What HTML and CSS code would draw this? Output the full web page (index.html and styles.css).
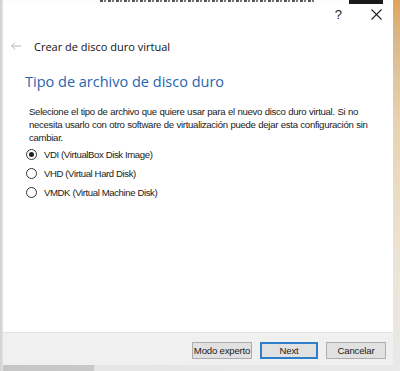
FILE: index.html
```html
<!DOCTYPE html>
<html lang="es">
<head>
    <meta charset="UTF-8">
    <title>Crear de disco duro virtual</title>
    <link rel="stylesheet" href="styles.css">
</head>
<body>
    <div class="desktop">
        <div class="left-edge"></div>
        <div class="column">
            <div class="behind">
                <span class="behind-text"></span>
                <span class="behind-bar"></span>
            </div>
            <div class="dialog">
                <div class="title-bar">
                    <span class="title-btn help">?</span>
                    <span class="title-btn close">
                        <svg width="11" height="11" viewBox="0 0 11 11" fill="none" stroke="#222" stroke-width="1.1">
                            <line x1="0.5" y1="0.5" x2="10.5" y2="10.5"></line>
                            <line x1="10.5" y1="0.5" x2="0.5" y2="10.5"></line>
                        </svg>
                    </span>
                </div>
                <div class="wizard-header">
                    <svg class="back" width="10" height="8" viewBox="0 0 10 8" fill="none" stroke="#b5b5b5" stroke-width="1">
                        <line x1="0.5" y1="4" x2="10" y2="4"></line>
                        <polyline points="4,0.5 0.7,4 4,7.5"></polyline>
                    </svg>
                    <span class="wizard-title">Crear de disco duro virtual</span>
                </div>
                <div class="page">
                    <h2 class="page-title">Tipo de archivo de disco duro</h2>
                    <p class="description">Selecione el tipo de archivo que quiere usar para el nuevo disco duro virtual. Si no necesita usarlo con otro software de virtualización puede dejar esta configuración sin cambiar.</p>
                    <div class="options">
                        <label class="option"><span class="radio checked"></span>VDI (VirtualBox Disk Image)</label>
                        <label class="option"><span class="radio"></span>VHD (Virtual Hard Disk)</label>
                        <label class="option"><span class="radio"></span>VMDK (Virtual Machine Disk)</label>
                    </div>
                </div>
                <div class="footer">
                    <button class="btn">Modo experto</button>
                    <button class="btn default">Next</button>
                    <button class="btn">Cancelar</button>
                </div>
            </div>
            <div class="shadow"></div>
        </div>
        <div class="right-edge"></div>
    </div>
</body>
</html>
```

FILE: styles.css
```css
* {
    margin: 0;
    padding: 0;
    box-sizing: border-box;
}

body {
    width: 400px;
    height: 371px;
    overflow: hidden;
    background: #d4d4d4;
    font-family: "Liberation Sans", Arial, sans-serif;
}

.desktop {
    display: flex;
    height: 371px;
}

.left-edge {
    width: 3px;
    background: linear-gradient(to right, #cfcfcf, #e4e4e4);
}

.column {
    width: 390px;
    display: flex;
    flex-direction: column;
}

.right-edge {
    width: 7px;
    background: linear-gradient(to bottom, #e2a35a 0, #d9b98c 40px, #e8d2b0 120px, #ece3d3 250px, #e9e9e9 371px);
}

/* bottom of the window lying behind the dialog */
.behind {
    height: 4px;
    background: #fdfdfd;
    display: flex;
    overflow: hidden;
}

.behind-text {
    width: 215px;
    height: 2px;
    margin-left: 97px;
    background: repeating-linear-gradient(to right, #555 0, #555 3px, transparent 3px, transparent 4px, #777 4px, #777 6px, transparent 6px, transparent 8px);
}

.behind-bar {
    width: 34px;
    margin-left: 34px;
    background: #1a1a1a;
}

.dialog {
    height: 361px;
    background: #fff;
    display: flex;
    flex-direction: column;
}

.title-bar {
    height: 20px;
    display: flex;
    justify-content: flex-end;
    align-items: center;
    padding-right: 11px;
}

.title-btn {
    font-size: 13px;
    color: #222;
    line-height: 13px;
}

.help {
    margin-right: 29px;
}

.close {
    display: flex;
}

.wizard-header {
    height: 44px;
    display: flex;
    align-items: center;
    padding-left: 8px;
}

.back {
    margin-right: 13px;
}

.wizard-title {
    font-family: "Open Sans", sans-serif;
    font-size: 11px;
    color: #111;
}

.page {
    flex: 1;
    padding: 4px 16px 0 22px;
}

.page-title {
    font-family: "Open Sans", sans-serif;
    font-weight: normal;
    font-size: 14.5px;
    color: #2765ae;
    line-height: 20px;
}

.description {
    margin: 13px 0 0 4px;
    width: 346px;
    font-size: 9.6px;
    letter-spacing: -0.3px;
    word-spacing: 0.3px;
    line-height: 13px;
    color: #1a1a1a;
}

.options {
    margin: 1px 0 0 1px;
    display: flex;
    flex-direction: column;
}

.option {
    display: flex;
    align-items: center;
    height: 19px;
    font-size: 9.6px;
    letter-spacing: -0.4px;
    color: #1a1a1a;
}

.radio {
    width: 11px;
    height: 11px;
    border: 1px solid #333;
    border-radius: 50%;
    margin-right: 7px;
    display: flex;
    align-items: center;
    justify-content: center;
}

.radio.checked::after {
    content: "";
    width: 5px;
    height: 5px;
    border-radius: 50%;
    background: #222;
}

.footer {
    height: 33px;
    background: #f0f0f0;
    border-top: 1px solid #e3e3e3;
    display: flex;
    justify-content: flex-end;
    align-items: center;
    gap: 8px;
    padding-right: 7px;
    padding-top: 2px;
}

.btn {
    width: 60px;
    height: 17px;
    background: #e1e1e1;
    border: 1px solid #adadad;
    font-family: "Liberation Sans", Arial, sans-serif;
    font-size: 9.6px;
    letter-spacing: -0.2px;
    white-space: nowrap;
    color: #222;
}

.btn.default {
    border: 2px solid #2f7fcb;
    width: 58px;
}

.shadow {
    flex: 1;
    background: linear-gradient(to right, #c6c6c6 0, #c8c8c8 90px, #e6e6e6 92px, #e8e8e8 390px);
}
```
